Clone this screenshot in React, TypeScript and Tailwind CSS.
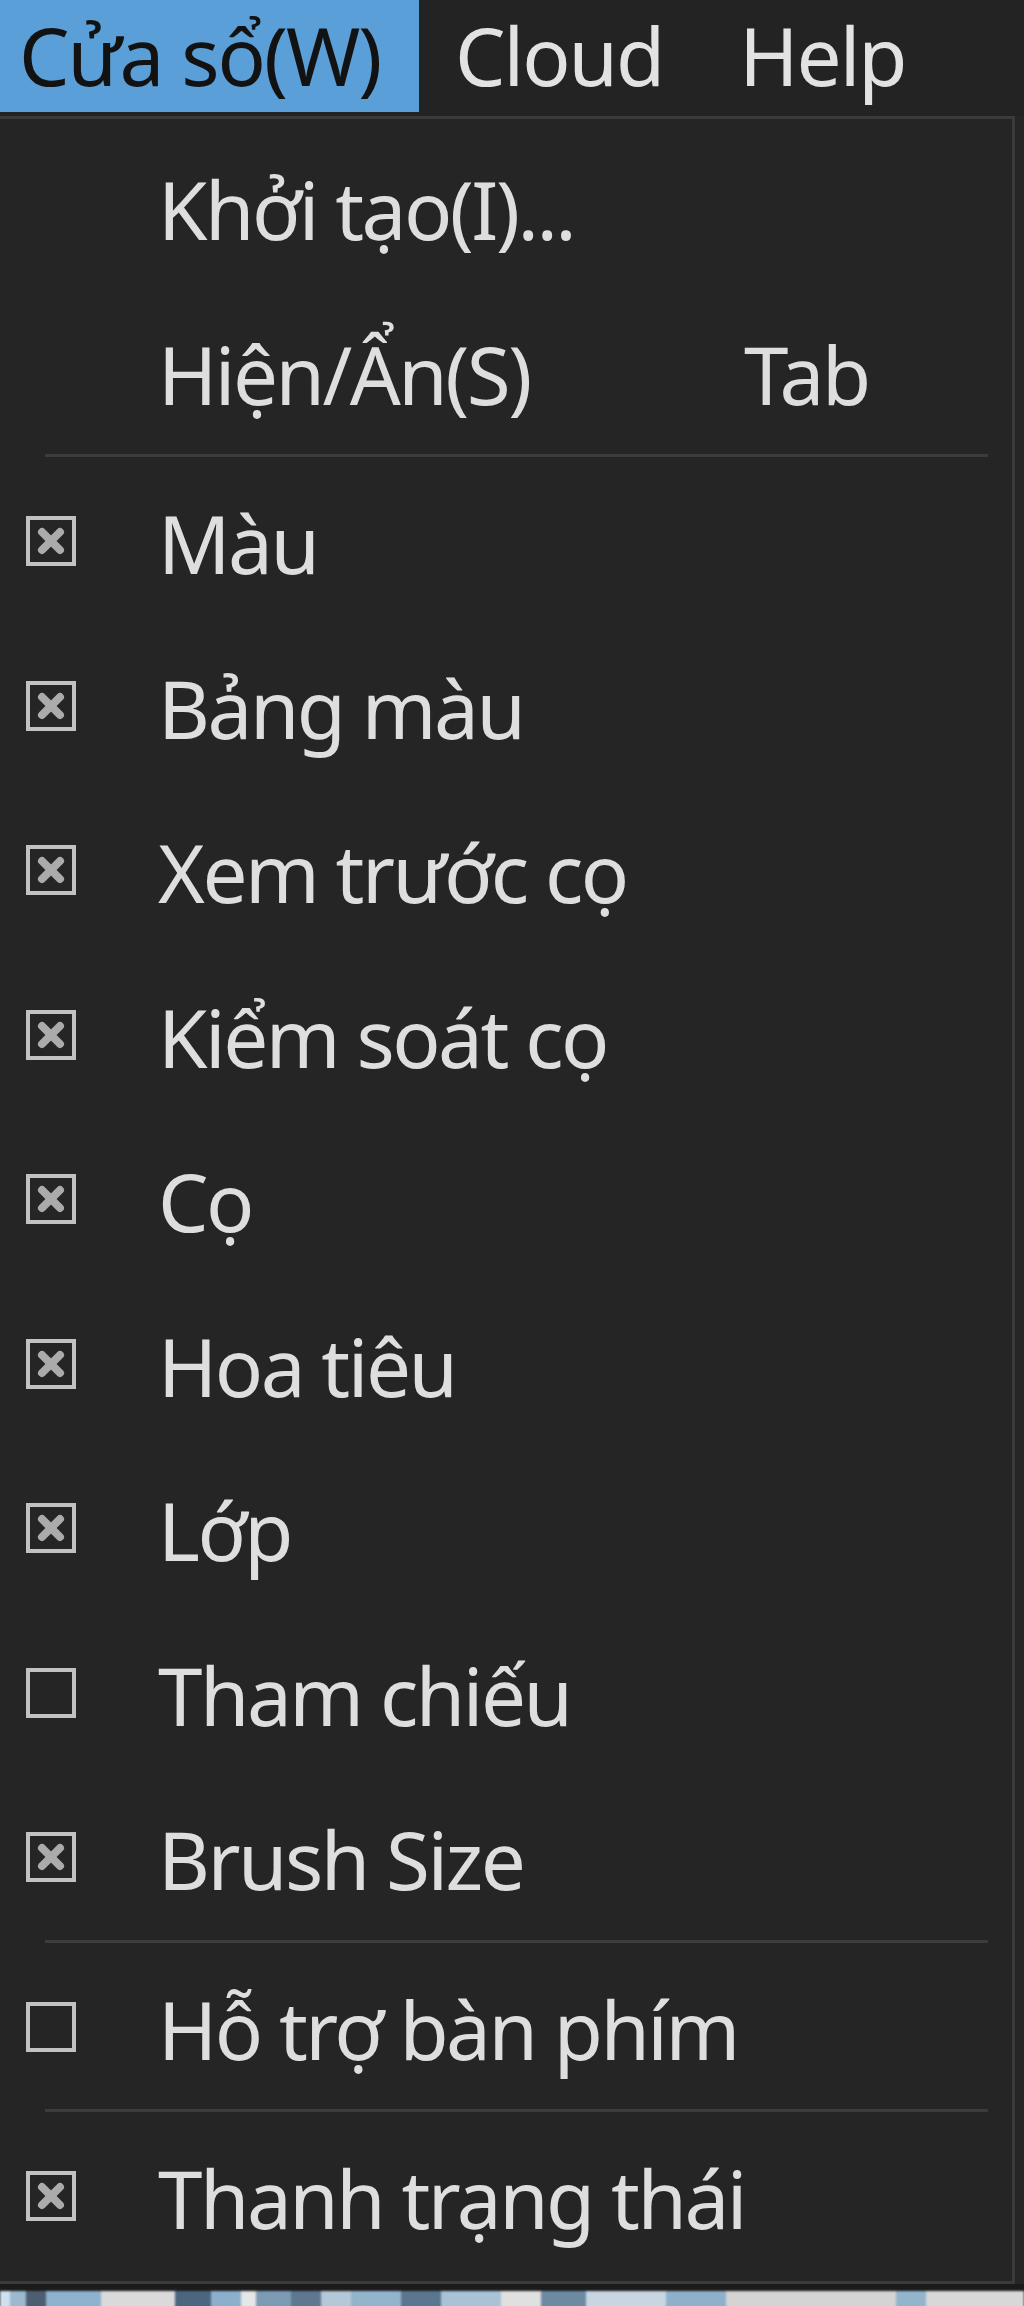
import React from "react";

type Item =
  | { kind: "sep" }
  | { kind: "item"; label: string; shortcut?: string; check?: "on" | "off" };

const items: Item[] = [
  { kind: "item", label: "Khởi tạo(I)..." },
  { kind: "item", label: "Hiện/Ẩn(S)", shortcut: "Tab" },
  { kind: "sep" },
  { kind: "item", label: "Màu", check: "on" },
  { kind: "item", label: "Bảng màu", check: "on" },
  { kind: "item", label: "Xem trước cọ", check: "on" },
  { kind: "item", label: "Kiểm soát cọ", check: "on" },
  { kind: "item", label: "Cọ", check: "on" },
  { kind: "item", label: "Hoa tiêu", check: "on" },
  { kind: "item", label: "Lớp", check: "on" },
  { kind: "item", label: "Tham chiếu", check: "off" },
  { kind: "item", label: "Brush Size", check: "on" },
  { kind: "sep" },
  { kind: "item", label: "Hỗ trợ bàn phím", check: "off" },
  { kind: "sep" },
  { kind: "item", label: "Thanh trạng thái", check: "on" },
];

function CheckBox({ on }: { on: boolean }) {
  return (
    <svg width="50" height="50" viewBox="0 0 50 50" className="block">
      <rect x="2" y="2" width="46" height="46" fill="none" stroke="#c2c2c2" strokeWidth="4" />
      {on && (
        <g stroke="#ababab" strokeWidth="8" strokeLinecap="round">
          <line x1="16" y1="16" x2="34" y2="34" />
          <line x1="34" y1="16" x2="16" y2="34" />
        </g>
      )}
    </svg>
  );
}

export default function App() {
  const font = { fontFamily: '"Noto Sans", "Open Sans", sans-serif' };
  return (
    <div
      className="relative w-[1024px] h-[2306px] overflow-hidden bg-[#262626] text-[80px] leading-normal"
      style={font}
    >
      {/* menubar */}
      <div className="flex h-[112px] bg-[#232323]">
        <div className="flex w-[419px] items-center bg-[#5b9fd8] pl-[19px] pb-[2px] text-[#121212] tracking-[-2px] whitespace-nowrap">
          Cửa sổ(W)
        </div>
        <div className="flex items-center pl-[36px] pb-[2px] text-[#e2e2e2] tracking-[-2px]">Cloud</div>
        <div className="flex items-center pl-[76px] pb-[2px] text-[#e2e2e2] tracking-[-2px]">Help</div>
        <div className="flex-1" />
      </div>
      <div className="h-[4px] bg-[#232323]" />

      {/* dropdown */}
      <div className="w-[1015px] border-t-[3px] border-r-[3px] border-b-[3px] border-[#3b3b3b] bg-[#252525] pt-[6px] pb-[2px]">
        {items.map((it, i) =>
          it.kind === "sep" ? (
            <div key={i} className="h-[5px] pl-[45px] pr-[24px]">
              <div className="h-[3px] bg-[#3c3c3c]" />
            </div>
          ) : (
            <div key={i} className="flex h-[164.5px] items-center">
              <div className="w-[76px] pl-[26px] flex items-center">
                {it.check && <CheckBox on={it.check === "on"} />}
              </div>
              <div className="ml-[82px] w-[586px] pt-[4px] text-[#dedede] tracking-[-2.5px] whitespace-nowrap">
                {it.label}
              </div>
              {it.shortcut && (
                <div className="pt-[4px] text-[#dedede] tracking-[-2.5px]">{it.shortcut}</div>
              )}
            </div>
          )
        )}
      </div>

      {/* shadow + blurred background content */}
      <div className="h-[7px] bg-[#1b1b1b]" />
      <div className="flex h-[20px] blur-[1px]">
        <div className="w-[10px] bg-[#cfe0ee]" />
        <div className="w-[16px] bg-[#9cb9d0]" />
        <div className="w-[20px] bg-[#4c5e70]" />
        <div className="w-[55px] bg-[#8fb2ce]" />
        <div className="w-[74px] bg-[#dadada]" />
        <div className="w-[36px] bg-[#4b6680]" />
        <div className="w-[30px] bg-[#8cb0cc]" />
        <div className="w-[15px] bg-[#e6e6e6]" />
        <div className="w-[35px] bg-[#7c9cb6]" />
        <div className="w-[30px] bg-[#5d7890]" />
        <div className="w-[30px] bg-[#b4c8d8]" />
        <div className="w-[50px] bg-[#93b4cd]" />
        <div className="w-[40px] bg-[#5a7690]" />
        <div className="w-[60px] bg-[#a9c2d6]" />
        <div className="w-[40px] bg-[#e0e0e0]" />
        <div className="w-[45px] bg-[#6d8aa3]" />
        <div className="w-[80px] bg-[#c8d6e2]" />
        <div className="w-[60px] bg-[#8fb0ca]" />
        <div className="w-[170px] bg-[#d4d4d4]" />
        <div className="w-[30px] bg-[#93b4cd]" />
        <div className="flex-1 bg-[#d8d8d8]" />
      </div>
    </div>
  );
}
